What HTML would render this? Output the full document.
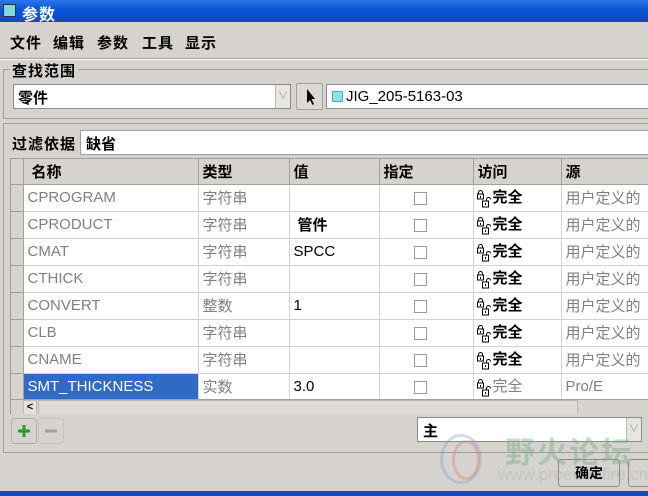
<!DOCTYPE html>
<html><head><meta charset="utf-8"><style>
*{margin:0;padding:0;box-sizing:border-box}
body{width:648px;height:496px;overflow:hidden;background:#d6d3ce;font-family:"Liberation Sans","WenQuanYi Zen Hei","Noto Sans CJK SC",sans-serif;font-size:15px;position:relative}
.a{position:absolute}
.cjk{font-family:"WenQuanYi Zen Hei","Noto Sans CJK SC",sans-serif;font-weight:bold}
.t{position:absolute;left:0;top:0;width:648px;height:22px;background:linear-gradient(#2a78e8,#0a56d6 40%,#0a4cc4);color:#fff}
.grid td{border-right:1px solid #d2d2d2;border-bottom:1px solid #d2d2d2;height:27px;padding:0 0 0 4px;color:#808080;white-space:nowrap;overflow:hidden;font-size:15px}
.grid tr.h td{background:#d6d3ce;color:#000;border-right:1px solid #a0a0a0;border-bottom:1px solid #a0a0a0;height:25px;font-weight:bold;font-family:"WenQuanYi Zen Hei","Noto Sans CJK SC",sans-serif}
.grid td.rh{background:#d6d3ce;border-right:1px solid #a0a0a0;border-bottom:1px solid #a0a0a0;padding:0}
.cb{display:inline-block;width:13px;height:13px;border:1px solid #9a9a9a;background:#fff;margin-left:30px;vertical-align:middle}
.grid td.v{color:#000}
.m{position:absolute;top:32px;letter-spacing:1px}
</style></head><body>
<div class="t"><div class="a" style="left:3px;top:4px;width:13px;height:13px;background:#7fd8d8;border:1px solid #235"></div><div class="a cjk" style="left:22px;top:1px;font-size:16px;letter-spacing:1px">参数</div></div>
<div class="m cjk" style="left:10px">文件</div><div class="m cjk" style="left:53px">编辑</div><div class="m cjk" style="left:97px">参数</div><div class="m cjk" style="left:142px">工具</div><div class="m cjk" style="left:185px">显示</div>
<div class="a" style="left:0;top:58px;width:648px;border-top:1px solid #a0a0a0;border-bottom:1px solid #fff"></div>
<div class="a" style="left:3px;top:69px;width:650px;height:50px;border:1px solid #a0a0a0;border-right:none"></div>
<div class="a cjk" style="left:10px;top:60px;background:#d6d3ce;padding:0 2px;font-size:15px;letter-spacing:1px">查找范围</div>
<div class="a" style="left:13px;top:84px;width:278px;height:25px;background:#fff;border:1px solid #8a8a8a"><span class="cjk" style="position:absolute;left:4px;top:2px">零件</span><div class="a" style="right:0;top:0;width:15px;height:23px;background:#e8e6e2;border-left:1px solid #bbb;color:#999;font-size:10px;text-align:center;line-height:23px">&#x2228;</div></div>
<div class="a" style="left:296px;top:83px;width:27px;height:27px;border:1px solid #a0a0a0;border-radius:2px;background:#dcd9d4"><svg width="25" height="25" class="a" style="left:0;top:0"><path d="M10 5 L10 19 L13 16 L15.5 21 L17 20 L14.5 15 L18 15 Z" fill="#000"/></svg></div>
<div class="a" style="left:326px;top:84px;width:330px;height:25px;background:#fff;border:1px solid #8a8a8a"><div class="a" style="left:5px;top:6px;width:11px;height:11px;background:#8ee0ea;border:1px solid #5aa"></div><span class="a" style="left:19px;top:3px;font-size:15px">JIG_205-5163-03</span></div>
<div class="a" style="left:3px;top:123px;width:650px;height:330px;border:1px solid #a0a0a0;border-right:none"></div>
<div class="a cjk" style="left:12px;top:133px;letter-spacing:1px">过滤依据</div>
<div class="a" style="left:80px;top:130px;width:580px;height:25px;background:#fff;border:1px solid #a0a0a0"><span class="cjk" style="position:absolute;left:5px;top:2px">缺省</span></div>
<div class="a" style="left:10px;top:158px;width:640px;height:256px;background:#fff;border-top:1px solid #a0a0a0;border-left:1px solid #a0a0a0;overflow:hidden">
<table class="grid" style="border-collapse:collapse;table-layout:fixed;width:660px" cellspacing="0">
<colgroup><col style="width:12px"><col style="width:175px"><col style="width:91px"><col style="width:90px"><col style="width:94px"><col style="width:88px"><col style="width:110px"></colgroup>
<tr class="h"><td class="rh"></td><td style="padding-left:8px">名称</td><td>类型</td><td>值</td><td>指定</td><td>访问</td><td>源</td></tr>
<tr><td class="rh"></td><td>CPROGRAM</td><td>字符串</td><td class="v"></td><td><span class="cb"></span></td><td class="L"></td><td>用户定义的</td></tr>
<tr><td class="rh"></td><td>CPRODUCT</td><td>字符串</td><td class="v cjk" style="padding-left:8px">管件</td><td><span class="cb"></span></td><td class="L"></td><td>用户定义的</td></tr>
<tr><td class="rh"></td><td>CMAT</td><td>字符串</td><td class="v">SPCC</td><td><span class="cb"></span></td><td class="L"></td><td>用户定义的</td></tr>
<tr><td class="rh"></td><td>CTHICK</td><td>字符串</td><td class="v"></td><td><span class="cb"></span></td><td class="L"></td><td>用户定义的</td></tr>
<tr><td class="rh"></td><td>CONVERT</td><td>整数</td><td class="v">1</td><td><span class="cb"></span></td><td class="L"></td><td>用户定义的</td></tr>
<tr><td class="rh"></td><td>CLB</td><td>字符串</td><td class="v"></td><td><span class="cb"></span></td><td class="L"></td><td>用户定义的</td></tr>
<tr><td class="rh"></td><td>CNAME</td><td>字符串</td><td class="v"></td><td><span class="cb"></span></td><td class="L"></td><td>用户定义的</td></tr>
<tr><td class="rh"></td><td style="background:#316ac5;color:#fff">SMT_THICKNESS</td><td>实数</td><td class="v">3.0</td><td><span class="cb"></span></td><td class="L n"></td><td>Pro/E</td></tr>
</table>
<div class="a" style="left:0;top:240px;width:640px;height:16px;background:#d6d3ce;border-top:1px solid #a0a0a0">
<div class="a" style="left:12px;top:0;width:14px;height:15px;background:#e4e2de;border:1px solid #bbb;font-size:11px;font-weight:bold;text-align:center;line-height:13px">&lt;</div>
<div class="a" style="left:27px;top:0;width:540px;height:15px;background:#dedbd6;border:1px solid #b8b8b8"></div>
</div>
</div>
<div class="a" style="left:11px;top:418px;width:26px;height:26px;border:1px solid #b0b0b0;border-radius:3px"><svg width="24" height="24"><path d="M12 6v12M6 12h12" stroke="#2a9a2a" stroke-width="3"/></svg></div>
<div class="a" style="left:38px;top:418px;width:26px;height:26px;border:1px solid #c4c4c4;border-radius:3px"><svg width="24" height="24"><path d="M6 12h12" stroke="#a0a0a0" stroke-width="3"/></svg></div>
<div class="a" style="left:417px;top:417px;width:225px;height:25px;background:#fff;border:1px solid #8a8a8a"><span class="cjk" style="position:absolute;left:5px;top:2px">主</span><div class="a" style="right:0;top:0;width:15px;height:23px;background:#e8e6e2;border-left:1px solid #bbb;color:#999;font-size:10px;text-align:center;line-height:23px">&#x2228;</div></div>
<div class="a" style="left:440px;top:434px;width:42px;height:50px;border:3px solid rgba(120,160,200,0.35);border-radius:50%"></div>
<div class="a" style="left:452px;top:440px;width:28px;height:40px;border:3px solid rgba(220,120,110,0.35);border-radius:50%"></div>
<div class="a cjk" style="left:505px;top:428px;font-size:30px;color:rgba(110,170,130,0.4);letter-spacing:2px">野火论坛</div>
<div class="a" style="left:498px;top:465px;font-size:17px;color:rgba(150,170,190,0.35)">www.proewildfire.cn</div>
<div class="a cjk" style="left:558px;top:459px;width:62px;height:28px;border:1px solid #8a8a8a;border-radius:3px;text-align:center;line-height:26px;font-size:14px">确定</div>
<div class="a" style="left:628px;top:459px;width:30px;height:28px;border:1px solid #8a8a8a;border-radius:3px"></div>
<div class="a" style="left:0;top:491px;width:648px;height:5px;background:#0a4cc4"></div>
<script>
var lk='<svg width="17" height="20" style="vertical-align:middle"><g fill="none" stroke="#000" stroke-width="1"><path d="M2.5 5V3.5a2 2 0 0 1 4 0V5"/><rect x="1.5" y="5" width="6" height="5" fill="#fff"/><path d="M10.5 12v-1.5a2 2 0 0 1 4 0"/><rect x="6.5" y="12" width="6" height="6" fill="#fff"/></g><path d="M4 7h1v2H4zM9 14h1v2H9z" fill="#000"/></svg>';
document.querySelectorAll('td.L').forEach(function(t){var n=t.classList.contains('n');t.innerHTML=lk+'<span class="'+(n?'':'cjk')+'" style="color:'+(n?'#808080':'#000')+'">完全</span>';t.style.paddingLeft='2px'});
</script>
</body></html>
